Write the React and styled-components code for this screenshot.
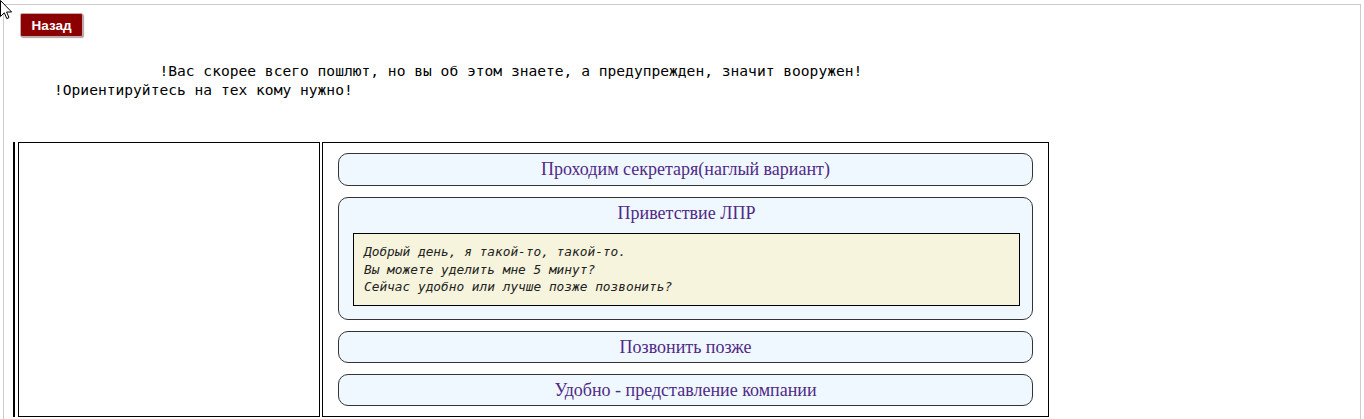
import React from 'react'
import styled, { createGlobalStyle } from 'styled-components'

const GlobalStyle = createGlobalStyle`
  body {
    margin: 0;
    background: #fff;
  }
`
const Page = styled.div`
  margin: 4px 3px 0 3px;
  border: 1px solid #cccccc;
  border-bottom: none;
  min-height: 420px;
  position: relative;
`
const Cursor = styled.svg`
  position: fixed;
  left: 0;
  top: 0;
  z-index: 10;
`
const BackButton = styled.button`
  display: block;
  margin: 8px 0 0 16px;
  width: 63px;
  height: 24px;
  padding: 0;
  background: #8b0000;
  color: #fff;
  border: 1px solid #c9a9a9;
  border-radius: 2px;
  box-shadow: 1px 1px 1px rgba(0,0,0,.35);
  font-family: "Liberation Sans", Arial, sans-serif;
  font-weight: bold;
  font-size: 13.5px;
`
const Notice = styled.pre`
  margin: 24px 0 0 50px;
  font-family: "DejaVu Sans Mono", monospace;
  font-size: 14.6px;
  line-height: 19px;
  color: #000;
`
const Layout = styled.div`
  display: flex;
  margin: 43px 0 0 9px;
  padding-left: 3px;
  border-left: 2px solid #000;
  gap: 2px;
  height: 275px;
`
const Cell = styled.div`
  box-sizing: border-box;
  border: 1px solid #000;
  width: ${p => p.$w}px;
  padding: ${p => p.$pad || '0'};
`
const Steps = styled.div`
  display: flex;
  flex-direction: column;
  gap: 11px;
`
const Panel = styled.div`
  border: 1px solid #333;
  border-radius: 10px;
  background: #f0f8ff;
  padding: ${p => p.$open ? '5px 12px 13px 14px' : '5px 12px'};
`
const PanelTitle = styled.div`
  text-align: center;
  font-family: "Liberation Serif", "Times New Roman", serif;
  font-size: 18px;
  line-height: 21px;
  color: #4f2a86;
  height: ${p => p.$h}px;
`
const Script = styled.pre`
  margin: 9px 0 0 0;
  padding: 9px 10px;
  background: #f6f4dc;
  border: 1px solid #000;
  font-family: "DejaVu Sans Mono", monospace;
  font-style: italic;
  font-size: 12.8px;
  line-height: 17.6px;
  color: #222;
`

const steps = [
  { title: 'Проходим секретаря(наглый вариант)', h: 21 },
  {
    title: 'Приветствие ЛПР',
    h: 21,
    text: 'Добрый день, я такой-то, такой-то.\nВы можете уделить мне 5 минут?\nСейчас удобно или лучше позже позвонить?'
  },
  { title: 'Позвонить позже', h: 20 },
  { title: 'Удобно - представление компании', h: 20 }
]

export default function App() {
  return (
    <>
      <GlobalStyle />
      <Cursor width="13" height="20" viewBox="0 0 13 20">
        <path d="M0.5 0.5 L0.5 16.5 L4.3 12.8 L6.8 18.6 L9 17.6 L6.6 12 L11.6 12 Z" fill="#fff" stroke="#000" strokeWidth="1" />
      </Cursor>
      <Page>
        <BackButton>Назад</BackButton>
        <Notice>{'            !Вас скорее всего пошлют, но вы об этом знаете, а предупрежден, значит вооружен!\n!Ориентируйтесь на тех кому нужно!'}</Notice>
        <Layout>
          <Cell $w={302} />
          <Cell $w={727} $pad="10px 15px">
            <Steps>
              {steps.map((s, i) => (
                <Panel key={i} $open={!!s.text}>
                  <PanelTitle $h={s.h}>{s.title}</PanelTitle>
                  {s.text && <Script>{s.text}</Script>}
                </Panel>
              ))}
            </Steps>
          </Cell>
        </Layout>
      </Page>
    </>
  )
}
